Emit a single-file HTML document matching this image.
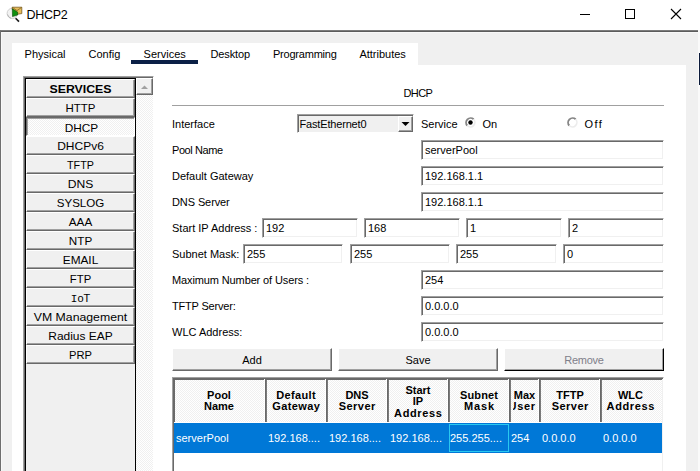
<!DOCTYPE html><html><head><meta charset="utf-8"><style>
html,body{margin:0;padding:0}
body{width:700px;height:471px;overflow:hidden;position:relative;background:#fff;font-family:"Liberation Sans", sans-serif;color:#000}
div{box-sizing:border-box}
</style></head><body>
<svg style="position:absolute;left:0;top:0" width="26" height="26" viewBox="0 0 26 26">
<circle cx="12.3" cy="13.4" r="5.2" fill="#f2f2f2" stroke="#cfcfcf" stroke-width="1"/>
<path d="M7.6 14.5 A5 5 0 0 0 11 18.2" fill="none" stroke="#a8a8a8" stroke-width="0.8"/>
<line x1="15.6" y1="18.2" x2="19" y2="21.6" stroke="#1a1a1a" stroke-width="1.6"/>
<path d="M12.2 7.2 L21.8 7.2 L21.8 13.6 L17.5 14.2 L12.2 9.2 Z" fill="#e6bd5c" stroke="#6a4c10" stroke-width="0.7"/>
<path d="M12.4 7.4 L17 10.6 L21.6 7.4" fill="none" stroke="#7a5a18" stroke-width="0.7"/>
<path d="M12.3 8.8 L17.6 12 L17.6 15 L12.5 16.6 Z" fill="#0f8f0f" stroke="#0a4a0a" stroke-width="0.6"/>
</svg>
<div style="position:absolute;left:26.5px;top:6.67px;height:16px;line-height:16px;font-size:12.5px;white-space:nowrap;text-align:left;color:#000;letter-spacing:-0.3px;">DHCP2</div>
<div style="position:absolute;left:580px;top:14px;width:10px;height:1px;background:#000;"></div>
<div style="position:absolute;left:625px;top:9px;width:10px;height:10px;border:1px solid #000;"></div>
<svg style="position:absolute;left:670px;top:8px" width="12" height="12" viewBox="0 0 12 12"><path d="M1 1 L11 11 M11 1 L1 11" stroke="#000" stroke-width="1.1"/></svg>
<div style="position:absolute;left:0px;top:30px;width:698px;height:441px;background:#f0f0f0;border-top:1px solid #7c7c7c;border-left:1px solid #6e6e6e;box-shadow:inset 0 1px #5c5c5c;"></div>
<div style="position:absolute;left:1px;top:32px;width:697px;height:1px;background:#f8f8f8;"></div>
<div style="position:absolute;left:1px;top:32px;width:1px;height:439px;background:#f8f8f8;"></div>
<div style="position:absolute;left:698px;top:30px;width:2px;height:441px;background:#fafafa;"></div>
<div style="position:absolute;left:699px;top:53px;width:1px;height:32px;background:#0b1a3a;"></div>
<div style="position:absolute;left:12px;top:43px;width:406px;height:22px;background:#fff;"></div>
<div style="position:absolute;left:24.6px;top:47.19px;height:14px;line-height:14px;font-size:11px;white-space:nowrap;text-align:left;color:#000;letter-spacing:0px;">Physical</div>
<div style="position:absolute;left:88.5px;top:47.19px;height:14px;line-height:14px;font-size:11px;white-space:nowrap;text-align:left;color:#000;letter-spacing:0px;">Config</div>
<div style="position:absolute;left:143.6px;top:47.19px;height:14px;line-height:14px;font-size:11px;white-space:nowrap;text-align:left;color:#000;letter-spacing:0px;">Services</div>
<div style="position:absolute;left:210.4px;top:47.19px;height:14px;line-height:14px;font-size:11px;white-space:nowrap;text-align:left;color:#000;letter-spacing:-0.1px;">Desktop</div>
<div style="position:absolute;left:273px;top:47.19px;height:14px;line-height:14px;font-size:11px;white-space:nowrap;text-align:left;color:#000;letter-spacing:-0.22px;">Programming</div>
<div style="position:absolute;left:359.4px;top:47.19px;height:14px;line-height:14px;font-size:11px;white-space:nowrap;text-align:left;color:#000;letter-spacing:0px;">Attributes</div>
<div style="position:absolute;left:131px;top:60px;width:67px;height:4px;background:#0b2046;"></div>
<div style="position:absolute;left:12px;top:65px;width:674px;height:406px;background:#fff;"></div>
<div style="position:absolute;left:23px;top:76px;width:131px;height:395px;border-top:1px solid #a0a0a0;border-left:1px solid #a0a0a0;border-right:1px solid #fff;box-shadow:inset 1px 1px #696969;"></div>
<div style="position:absolute;left:25px;top:78px;width:111px;height:393px;background:#f0f0f0;border:1px solid #000;border-bottom:none;"></div>
<div style="position:absolute;left:26px;top:79px;width:109px;height:19px;box-sizing:border-box;background:#f0f0f0;border:1px solid;border-color:#fff #696969 #696969 #fff;box-shadow:inset -1px -1px #a0a0a0;"></div>
<div style="position:absolute;left:26px;top:82.19px;width:109px;height:14px;line-height:14px;font-size:11px;white-space:nowrap;text-align:center;color:#000;font-weight:bold;transform:scaleX(1.120);">SERVICES</div>
<div style="position:absolute;left:26px;top:98px;width:109px;height:19px;box-sizing:border-box;background:#f0f0f0;border:1px solid;border-color:#fff #696969 #696969 #fff;box-shadow:inset -1px -1px #a0a0a0;"></div>
<div style="position:absolute;left:26px;top:101.19px;width:109px;height:14px;line-height:14px;font-size:11px;white-space:nowrap;text-align:center;color:#000;transform:scaleX(1.044);">HTTP</div>
<div style="position:absolute;left:26px;top:117px;width:109px;height:19px;background:repeating-conic-gradient(#f0f0f0 0 25%,#fff 0 50%) 0 0/2px 2px;border:1px solid;border-color:#696969 #fff #fff #696969;box-shadow:inset 1px 1px #a0a0a0;"></div>
<div style="position:absolute;left:27px;top:121.19px;width:109px;height:14px;line-height:14px;font-size:11px;white-space:nowrap;text-align:center;color:#000;transform:scaleX(1.077);">DHCP</div>
<div style="position:absolute;left:26px;top:136px;width:109px;height:19px;box-sizing:border-box;background:#f0f0f0;border:1px solid;border-color:#fff #696969 #696969 #fff;box-shadow:inset -1px -1px #a0a0a0;"></div>
<div style="position:absolute;left:26px;top:139.19px;width:109px;height:14px;line-height:14px;font-size:11px;white-space:nowrap;text-align:center;color:#000;transform:scaleX(1.090);">DHCPv6</div>
<div style="position:absolute;left:26px;top:155px;width:109px;height:19px;box-sizing:border-box;background:#f0f0f0;border:1px solid;border-color:#fff #696969 #696969 #fff;box-shadow:inset -1px -1px #a0a0a0;"></div>
<div style="position:absolute;left:26px;top:158.19px;width:109px;height:14px;line-height:14px;font-size:11px;white-space:nowrap;text-align:center;color:#000;transform:scaleX(0.978);">TFTP</div>
<div style="position:absolute;left:26px;top:174px;width:109px;height:19px;box-sizing:border-box;background:#f0f0f0;border:1px solid;border-color:#fff #696969 #696969 #fff;box-shadow:inset -1px -1px #a0a0a0;"></div>
<div style="position:absolute;left:26px;top:177.19px;width:109px;height:14px;line-height:14px;font-size:11px;white-space:nowrap;text-align:center;color:#000;transform:scaleX(1.100);">DNS</div>
<div style="position:absolute;left:26px;top:193px;width:109px;height:19px;box-sizing:border-box;background:#f0f0f0;border:1px solid;border-color:#fff #696969 #696969 #fff;box-shadow:inset -1px -1px #a0a0a0;"></div>
<div style="position:absolute;left:26px;top:196.19px;width:109px;height:14px;line-height:14px;font-size:11px;white-space:nowrap;text-align:center;color:#000;transform:scaleX(1.052);">SYSLOG</div>
<div style="position:absolute;left:26px;top:212px;width:109px;height:19px;box-sizing:border-box;background:#f0f0f0;border:1px solid;border-color:#fff #696969 #696969 #fff;box-shadow:inset -1px -1px #a0a0a0;"></div>
<div style="position:absolute;left:26px;top:215.19px;width:109px;height:14px;line-height:14px;font-size:11px;white-space:nowrap;text-align:center;color:#000;transform:scaleX(1.064);">AAA</div>
<div style="position:absolute;left:26px;top:231px;width:109px;height:19px;box-sizing:border-box;background:#f0f0f0;border:1px solid;border-color:#fff #696969 #696969 #fff;box-shadow:inset -1px -1px #a0a0a0;"></div>
<div style="position:absolute;left:26px;top:234.19px;width:109px;height:14px;line-height:14px;font-size:11px;white-space:nowrap;text-align:center;color:#000;transform:scaleX(1.062);">NTP</div>
<div style="position:absolute;left:26px;top:250px;width:109px;height:19px;box-sizing:border-box;background:#f0f0f0;border:1px solid;border-color:#fff #696969 #696969 #fff;box-shadow:inset -1px -1px #a0a0a0;"></div>
<div style="position:absolute;left:26px;top:253.19px;width:109px;height:14px;line-height:14px;font-size:11px;white-space:nowrap;text-align:center;color:#000;transform:scaleX(1.075);">EMAIL</div>
<div style="position:absolute;left:26px;top:269px;width:109px;height:19px;box-sizing:border-box;background:#f0f0f0;border:1px solid;border-color:#fff #696969 #696969 #fff;box-shadow:inset -1px -1px #a0a0a0;"></div>
<div style="position:absolute;left:26px;top:272.19px;width:109px;height:14px;line-height:14px;font-size:11px;white-space:nowrap;text-align:center;color:#000;transform:scaleX(1.026);">FTP</div>
<div style="position:absolute;left:26px;top:288px;width:109px;height:19px;box-sizing:border-box;background:#f0f0f0;border:1px solid;border-color:#fff #696969 #696969 #fff;box-shadow:inset -1px -1px #a0a0a0;"></div>
<div style="position:absolute;left:26px;top:291.19px;width:109px;height:14px;line-height:14px;font-size:11px;white-space:nowrap;text-align:center;color:#000;transform:scaleX(1.000);"><span style="font-family:'Liberation Mono'">I</span>oT</div>
<div style="position:absolute;left:26px;top:307px;width:109px;height:19px;box-sizing:border-box;background:#f0f0f0;border:1px solid;border-color:#fff #696969 #696969 #fff;box-shadow:inset -1px -1px #a0a0a0;"></div>
<div style="position:absolute;left:26px;top:310.19px;width:109px;height:14px;line-height:14px;font-size:11px;white-space:nowrap;text-align:center;color:#000;transform:scaleX(1.115);">VM Management</div>
<div style="position:absolute;left:26px;top:326px;width:109px;height:19px;box-sizing:border-box;background:#f0f0f0;border:1px solid;border-color:#fff #696969 #696969 #fff;box-shadow:inset -1px -1px #a0a0a0;"></div>
<div style="position:absolute;left:26px;top:329.19px;width:109px;height:14px;line-height:14px;font-size:11px;white-space:nowrap;text-align:center;color:#000;transform:scaleX(1.086);">Radius EAP</div>
<div style="position:absolute;left:26px;top:345px;width:109px;height:19px;box-sizing:border-box;background:#f0f0f0;border:1px solid;border-color:#fff #696969 #696969 #fff;box-shadow:inset -1px -1px #a0a0a0;"></div>
<div style="position:absolute;left:26px;top:348.19px;width:109px;height:14px;line-height:14px;font-size:11px;white-space:nowrap;text-align:center;color:#000;transform:scaleX(1.014);">PRP</div>
<div style="position:absolute;left:136px;top:95px;width:17px;height:376px;background:repeating-conic-gradient(#f0f0f0 0 25%,#fff 0 50%) 0 0/2px 2px;"></div>
<div style="position:absolute;left:136px;top:78px;width:17px;height:17px;box-sizing:border-box;background:#f0f0f0;border:1px solid;border-color:#fff #696969 #696969 #fff;box-shadow:inset -1px -1px #a0a0a0;"></div>
<svg style="position:absolute;left:136px;top:78px" width="17" height="17"><path d="M5 11 L12 11 L8.5 7.5 Z" fill="#a0a0a0"/></svg>
<div style="position:absolute;left:403.5px;top:86.19px;height:14px;line-height:14px;font-size:11px;white-space:nowrap;text-align:left;color:#000;letter-spacing:-0.6px;">DHCP</div>
<div style="position:absolute;left:172px;top:105px;width:492px;height:1px;background:#a0a0a0;"></div>
<div style="position:absolute;left:172px;top:117.19px;height:14px;line-height:14px;font-size:11px;white-space:nowrap;text-align:left;color:#000;">Interface</div>
<div style="position:absolute;left:297px;top:114px;width:117px;height:19px;box-sizing:border-box;background:#f0f0f0;border:1px solid;border-color:#a0a0a0 #fff #fff #a0a0a0;box-shadow:inset 1px 1px #696969,inset -1px -1px #f0f0f0;"></div>
<div style="position:absolute;left:299.5px;top:117.19px;height:14px;line-height:14px;font-size:11px;white-space:nowrap;text-align:left;color:#000;letter-spacing:-0.17px;">FastEthernet0</div>
<div style="position:absolute;left:398px;top:116px;width:15px;height:16px;box-sizing:border-box;background:#f0f0f0;border:1px solid;border-color:#fff #696969 #696969 #fff;box-shadow:inset -1px -1px #a0a0a0;"></div>
<svg style="position:absolute;left:398px;top:116px" width="15" height="16"><path d="M3.5 6 L11.5 6 L7.5 10 Z" fill="#000"/></svg>
<div style="position:absolute;left:421px;top:117.19px;height:14px;line-height:14px;font-size:11px;white-space:nowrap;text-align:left;color:#000;">Service</div>
<svg style="position:absolute;left:463.5px;top:116px" width="13" height="13" viewBox="0 0 13 13">
<path d="M3.32 9.68 A4.5 4.5 0 0 1 9.68 3.32" fill="none" stroke="#858585" stroke-width="1.9"/>
<path d="M9.68 3.32 A4.5 4.5 0 0 1 3.32 9.68" fill="none" stroke="#ececec" stroke-width="1.6"/>
<circle cx="6.5" cy="6.5" r="2.2" fill="#000"/>
</svg>
<div style="position:absolute;left:482.4px;top:117.19px;height:14px;line-height:14px;font-size:11px;white-space:nowrap;text-align:left;color:#000;">On</div>
<svg style="position:absolute;left:566px;top:116px" width="13" height="13" viewBox="0 0 13 13">
<path d="M3.32 9.68 A4.5 4.5 0 0 1 9.68 3.32" fill="none" stroke="#858585" stroke-width="1.9"/>
<path d="M9.68 3.32 A4.5 4.5 0 0 1 3.32 9.68" fill="none" stroke="#ececec" stroke-width="1.6"/>

</svg>
<div style="position:absolute;left:584.5px;top:117.19px;height:14px;line-height:14px;font-size:11px;white-space:nowrap;text-align:left;color:#000;letter-spacing:1.4px;">Off</div>
<div style="position:absolute;left:172px;top:143.19px;height:14px;line-height:14px;font-size:11px;white-space:nowrap;text-align:left;color:#000;letter-spacing:-0.42px;">Pool Name</div>
<div style="position:absolute;left:421px;top:140px;width:243px;height:20px;box-sizing:border-box;background:#fff;border:1px solid;border-color:#a0a0a0 #fff #fff #a0a0a0;box-shadow:inset 1px 1px #696969,inset -1px -1px #f0f0f0;"></div>
<div style="position:absolute;left:425px;top:143.19px;height:14px;line-height:14px;font-size:11px;white-space:nowrap;text-align:left;color:#000;">serverPool</div>
<div style="position:absolute;left:172px;top:169.19px;height:14px;line-height:14px;font-size:11px;white-space:nowrap;text-align:left;color:#000;letter-spacing:0px;">Default Gateway</div>
<div style="position:absolute;left:421px;top:166px;width:243px;height:20px;box-sizing:border-box;background:#fff;border:1px solid;border-color:#a0a0a0 #fff #fff #a0a0a0;box-shadow:inset 1px 1px #696969,inset -1px -1px #f0f0f0;"></div>
<div style="position:absolute;left:425px;top:169.19px;height:14px;line-height:14px;font-size:11px;white-space:nowrap;text-align:left;color:#000;">192.168.1.1</div>
<div style="position:absolute;left:172px;top:195.19px;height:14px;line-height:14px;font-size:11px;white-space:nowrap;text-align:left;color:#000;letter-spacing:-0.1px;">DNS Server</div>
<div style="position:absolute;left:421px;top:192px;width:243px;height:20px;box-sizing:border-box;background:#fff;border:1px solid;border-color:#a0a0a0 #fff #fff #a0a0a0;box-shadow:inset 1px 1px #696969,inset -1px -1px #f0f0f0;"></div>
<div style="position:absolute;left:425px;top:195.19px;height:14px;line-height:14px;font-size:11px;white-space:nowrap;text-align:left;color:#000;">192.168.1.1</div>
<div style="position:absolute;left:172px;top:221.19px;height:14px;line-height:14px;font-size:11px;white-space:nowrap;text-align:left;color:#000;">Start IP Address :</div>
<div style="position:absolute;left:262px;top:218px;width:96px;height:20px;box-sizing:border-box;background:#fff;border:1px solid;border-color:#a0a0a0 #fff #fff #a0a0a0;box-shadow:inset 1px 1px #696969,inset -1px -1px #f0f0f0;"></div>
<div style="position:absolute;left:266px;top:221.19px;height:14px;line-height:14px;font-size:11px;white-space:nowrap;text-align:left;color:#000;">192</div>
<div style="position:absolute;left:364px;top:218px;width:96px;height:20px;box-sizing:border-box;background:#fff;border:1px solid;border-color:#a0a0a0 #fff #fff #a0a0a0;box-shadow:inset 1px 1px #696969,inset -1px -1px #f0f0f0;"></div>
<div style="position:absolute;left:368px;top:221.19px;height:14px;line-height:14px;font-size:11px;white-space:nowrap;text-align:left;color:#000;">168</div>
<div style="position:absolute;left:466px;top:218px;width:96px;height:20px;box-sizing:border-box;background:#fff;border:1px solid;border-color:#a0a0a0 #fff #fff #a0a0a0;box-shadow:inset 1px 1px #696969,inset -1px -1px #f0f0f0;"></div>
<div style="position:absolute;left:470px;top:221.19px;height:14px;line-height:14px;font-size:11px;white-space:nowrap;text-align:left;color:#000;">1</div>
<div style="position:absolute;left:568px;top:218px;width:96px;height:20px;box-sizing:border-box;background:#fff;border:1px solid;border-color:#a0a0a0 #fff #fff #a0a0a0;box-shadow:inset 1px 1px #696969,inset -1px -1px #f0f0f0;"></div>
<div style="position:absolute;left:572px;top:221.19px;height:14px;line-height:14px;font-size:11px;white-space:nowrap;text-align:left;color:#000;">2</div>
<div style="position:absolute;left:172px;top:247.19px;height:14px;line-height:14px;font-size:11px;white-space:nowrap;text-align:left;color:#000;">Subnet Mask:</div>
<div style="position:absolute;left:243px;top:244px;width:100px;height:20px;box-sizing:border-box;background:#fff;border:1px solid;border-color:#a0a0a0 #fff #fff #a0a0a0;box-shadow:inset 1px 1px #696969,inset -1px -1px #f0f0f0;"></div>
<div style="position:absolute;left:247px;top:247.19px;height:14px;line-height:14px;font-size:11px;white-space:nowrap;text-align:left;color:#000;">255</div>
<div style="position:absolute;left:350px;top:244px;width:100px;height:20px;box-sizing:border-box;background:#fff;border:1px solid;border-color:#a0a0a0 #fff #fff #a0a0a0;box-shadow:inset 1px 1px #696969,inset -1px -1px #f0f0f0;"></div>
<div style="position:absolute;left:354px;top:247.19px;height:14px;line-height:14px;font-size:11px;white-space:nowrap;text-align:left;color:#000;">255</div>
<div style="position:absolute;left:456px;top:244px;width:101px;height:20px;box-sizing:border-box;background:#fff;border:1px solid;border-color:#a0a0a0 #fff #fff #a0a0a0;box-shadow:inset 1px 1px #696969,inset -1px -1px #f0f0f0;"></div>
<div style="position:absolute;left:460px;top:247.19px;height:14px;line-height:14px;font-size:11px;white-space:nowrap;text-align:left;color:#000;">255</div>
<div style="position:absolute;left:563px;top:244px;width:101px;height:20px;box-sizing:border-box;background:#fff;border:1px solid;border-color:#a0a0a0 #fff #fff #a0a0a0;box-shadow:inset 1px 1px #696969,inset -1px -1px #f0f0f0;"></div>
<div style="position:absolute;left:567px;top:247.19px;height:14px;line-height:14px;font-size:11px;white-space:nowrap;text-align:left;color:#000;">0</div>
<div style="position:absolute;left:172px;top:273.19px;height:14px;line-height:14px;font-size:11px;white-space:nowrap;text-align:left;color:#000;letter-spacing:-0.12px;">Maximum Number of Users :</div>
<div style="position:absolute;left:421px;top:270px;width:243px;height:20px;box-sizing:border-box;background:#fff;border:1px solid;border-color:#a0a0a0 #fff #fff #a0a0a0;box-shadow:inset 1px 1px #696969,inset -1px -1px #f0f0f0;"></div>
<div style="position:absolute;left:425px;top:273.19px;height:14px;line-height:14px;font-size:11px;white-space:nowrap;text-align:left;color:#000;">254</div>
<div style="position:absolute;left:172px;top:299.19px;height:14px;line-height:14px;font-size:11px;white-space:nowrap;text-align:left;color:#000;letter-spacing:-0.18px;">TFTP Server:</div>
<div style="position:absolute;left:421px;top:296px;width:243px;height:20px;box-sizing:border-box;background:#fff;border:1px solid;border-color:#a0a0a0 #fff #fff #a0a0a0;box-shadow:inset 1px 1px #696969,inset -1px -1px #f0f0f0;"></div>
<div style="position:absolute;left:425px;top:299.19px;height:14px;line-height:14px;font-size:11px;white-space:nowrap;text-align:left;color:#000;">0.0.0.0</div>
<div style="position:absolute;left:172px;top:325.19px;height:14px;line-height:14px;font-size:11px;white-space:nowrap;text-align:left;color:#000;letter-spacing:0px;">WLC Address:</div>
<div style="position:absolute;left:421px;top:322px;width:243px;height:20px;box-sizing:border-box;background:#fff;border:1px solid;border-color:#a0a0a0 #fff #fff #a0a0a0;box-shadow:inset 1px 1px #696969,inset -1px -1px #f0f0f0;"></div>
<div style="position:absolute;left:425px;top:325.19px;height:14px;line-height:14px;font-size:11px;white-space:nowrap;text-align:left;color:#000;">0.0.0.0</div>
<div style="position:absolute;left:172px;top:348px;width:160px;height:23px;box-sizing:border-box;background:#f0f0f0;border:1px solid;border-color:#fff #696969 #696969 #fff;box-shadow:inset -1px -1px #a0a0a0;"></div>
<div style="position:absolute;left:172px;top:353.19px;width:160px;height:14px;line-height:14px;font-size:11px;white-space:nowrap;text-align:center;color:#000;">Add</div>
<div style="position:absolute;left:338px;top:348px;width:160px;height:23px;box-sizing:border-box;background:#f0f0f0;border:1px solid;border-color:#fff #696969 #696969 #fff;box-shadow:inset -1px -1px #a0a0a0;"></div>
<div style="position:absolute;left:338px;top:353.19px;width:160px;height:14px;line-height:14px;font-size:11px;white-space:nowrap;text-align:center;color:#000;">Save</div>
<div style="position:absolute;left:504px;top:348px;width:160px;height:23px;background:#f0f0f0;border:1px solid;border-color:#fff #000 #000 #fff;box-shadow:inset -1px -1px #a0a0a0;"></div>
<div style="position:absolute;left:504px;top:353.19px;width:160px;height:14px;line-height:14px;font-size:11px;white-space:nowrap;text-align:center;color:#7f7f8a;letter-spacing:-0.25px;">Remove</div>
<div style="position:absolute;left:172px;top:377px;width:492px;height:94px;background:#fff;border-top:1px solid #a0a0a0;border-left:1px solid #a0a0a0;border-right:1px solid #fff;box-shadow:inset 1px 1px #696969;"></div>
<div style="position:absolute;left:662px;top:379px;width:1px;height:92px;background:#f0f0f0;"></div>
<div style="position:absolute;left:175px;top:380px;width:487px;height:42px;background:repeating-conic-gradient(#f0f0f0 0 25%,#fff 0 50%) 0 0/2px 2px;"></div>
<div style="position:absolute;left:174px;top:379px;width:488px;height:1px;background:#696969;"></div>
<div style="position:absolute;left:174px;top:379px;width:1px;height:44px;background:#696969;"></div>
<div style="position:absolute;left:174px;top:422px;width:488px;height:1px;background:#fff;"></div>
<div style="position:absolute;left:264px;top:379px;width:1px;height:43px;background:#fff;"></div>
<div style="position:absolute;left:265px;top:380px;width:2px;height:42px;background:#696969;box-shadow:inset -1px 0 #7a7a7a;"></div>
<div style="position:absolute;left:176px;top:388.19px;width:86px;height:14px;overflow:hidden;"><div style="position:absolute;left:-2px;top:0;width:90px;line-height:14px;font-size:11px;font-weight:bold;text-align:center;white-space:nowrap;letter-spacing:0px;text-indent:0px;">Pool</div></div>
<div style="position:absolute;left:176px;top:399.19px;width:86px;height:14px;overflow:hidden;"><div style="position:absolute;left:-2px;top:0;width:90px;line-height:14px;font-size:11px;font-weight:bold;text-align:center;white-space:nowrap;letter-spacing:0px;text-indent:0px;">Name</div></div>
<div style="position:absolute;left:325px;top:379px;width:1px;height:43px;background:#fff;"></div>
<div style="position:absolute;left:326px;top:380px;width:2px;height:42px;background:#696969;box-shadow:inset -1px 0 #7a7a7a;"></div>
<div style="position:absolute;left:269px;top:388.19px;width:54px;height:14px;overflow:hidden;"><div style="position:absolute;left:-2px;top:0;width:58px;line-height:14px;font-size:11px;font-weight:bold;text-align:center;white-space:nowrap;letter-spacing:0.35px;text-indent:0.35px;">Default</div></div>
<div style="position:absolute;left:269px;top:399.19px;width:54px;height:14px;overflow:hidden;"><div style="position:absolute;left:-2px;top:0;width:58px;line-height:14px;font-size:11px;font-weight:bold;text-align:center;white-space:nowrap;letter-spacing:0.4px;text-indent:0.4px;">Gateway</div></div>
<div style="position:absolute;left:386px;top:379px;width:1px;height:43px;background:#fff;"></div>
<div style="position:absolute;left:387px;top:380px;width:2px;height:42px;background:#696969;box-shadow:inset -1px 0 #7a7a7a;"></div>
<div style="position:absolute;left:330px;top:388.19px;width:54px;height:14px;overflow:hidden;"><div style="position:absolute;left:-2px;top:0;width:58px;line-height:14px;font-size:11px;font-weight:bold;text-align:center;white-space:nowrap;letter-spacing:0px;text-indent:0px;">DNS</div></div>
<div style="position:absolute;left:330px;top:399.19px;width:54px;height:14px;overflow:hidden;"><div style="position:absolute;left:-2px;top:0;width:58px;line-height:14px;font-size:11px;font-weight:bold;text-align:center;white-space:nowrap;letter-spacing:0.45px;text-indent:0.45px;">Server</div></div>
<div style="position:absolute;left:447px;top:379px;width:1px;height:43px;background:#fff;"></div>
<div style="position:absolute;left:448px;top:380px;width:2px;height:42px;background:#696969;box-shadow:inset -1px 0 #7a7a7a;"></div>
<div style="position:absolute;left:391px;top:383.19px;width:54px;height:14px;overflow:hidden;"><div style="position:absolute;left:-2px;top:0;width:58px;line-height:14px;font-size:11px;font-weight:bold;text-align:center;white-space:nowrap;letter-spacing:0px;text-indent:0px;">Start</div></div>
<div style="position:absolute;left:391px;top:394.19px;width:54px;height:14px;overflow:hidden;"><div style="position:absolute;left:-2px;top:0;width:58px;line-height:14px;font-size:11px;font-weight:bold;text-align:center;white-space:nowrap;letter-spacing:0px;text-indent:0px;">IP</div></div>
<div style="position:absolute;left:391px;top:406.19px;width:54px;height:14px;overflow:hidden;"><div style="position:absolute;left:-2px;top:0;width:58px;line-height:14px;font-size:11px;font-weight:bold;text-align:center;white-space:nowrap;letter-spacing:0.65px;text-indent:0.65px;">Address</div></div>
<div style="position:absolute;left:508px;top:379px;width:1px;height:43px;background:#fff;"></div>
<div style="position:absolute;left:509px;top:380px;width:2px;height:42px;background:#696969;box-shadow:inset -1px 0 #7a7a7a;"></div>
<div style="position:absolute;left:452px;top:388.19px;width:54px;height:14px;overflow:hidden;"><div style="position:absolute;left:-2px;top:0;width:58px;line-height:14px;font-size:11px;font-weight:bold;text-align:center;white-space:nowrap;letter-spacing:0.15px;text-indent:0.15px;">Subnet</div></div>
<div style="position:absolute;left:452px;top:399.19px;width:54px;height:14px;overflow:hidden;"><div style="position:absolute;left:-2px;top:0;width:58px;line-height:14px;font-size:11px;font-weight:bold;text-align:center;white-space:nowrap;letter-spacing:0.9px;text-indent:0.9px;">Mask</div></div>
<div style="position:absolute;left:538px;top:379px;width:1px;height:43px;background:#fff;"></div>
<div style="position:absolute;left:539px;top:380px;width:2px;height:42px;background:#696969;box-shadow:inset -1px 0 #7a7a7a;"></div>
<div style="position:absolute;left:513px;top:388.19px;width:23px;height:14px;overflow:hidden;"><div style="position:absolute;left:-2px;top:0;width:27px;line-height:14px;font-size:11px;font-weight:bold;text-align:center;white-space:nowrap;letter-spacing:0px;text-indent:0px;">Max</div></div>
<div style="position:absolute;left:513px;top:399.19px;width:23px;height:14px;overflow:hidden;"><div style="position:absolute;left:-2px;top:0;width:27px;line-height:14px;font-size:11px;font-weight:bold;text-align:center;white-space:nowrap;letter-spacing:0.7px;text-indent:-2.5px;">Users</div></div>
<div style="position:absolute;left:599px;top:379px;width:1px;height:43px;background:#fff;"></div>
<div style="position:absolute;left:600px;top:380px;width:2px;height:42px;background:#696969;box-shadow:inset -1px 0 #7a7a7a;"></div>
<div style="position:absolute;left:543px;top:388.19px;width:54px;height:14px;overflow:hidden;"><div style="position:absolute;left:-2px;top:0;width:58px;line-height:14px;font-size:11px;font-weight:bold;text-align:center;white-space:nowrap;letter-spacing:0px;text-indent:0px;">TFTP</div></div>
<div style="position:absolute;left:543px;top:399.19px;width:54px;height:14px;overflow:hidden;"><div style="position:absolute;left:-2px;top:0;width:58px;line-height:14px;font-size:11px;font-weight:bold;text-align:center;white-space:nowrap;letter-spacing:0.45px;text-indent:0.45px;">Server</div></div>
<div style="position:absolute;left:604px;top:388.19px;width:53px;height:14px;overflow:hidden;"><div style="position:absolute;left:-2px;top:0;width:57px;line-height:14px;font-size:11px;font-weight:bold;text-align:center;white-space:nowrap;letter-spacing:0px;text-indent:0px;">WLC</div></div>
<div style="position:absolute;left:604px;top:399.19px;width:53px;height:14px;overflow:hidden;"><div style="position:absolute;left:-2px;top:0;width:57px;line-height:14px;font-size:11px;font-weight:bold;text-align:center;white-space:nowrap;letter-spacing:0.65px;text-indent:0.65px;">Address</div></div>
<div style="position:absolute;left:174px;top:423px;width:488px;height:30px;background:#0078d7;"></div>
<div style="position:absolute;left:176px;top:431.19px;height:14px;line-height:14px;font-size:11px;white-space:nowrap;text-align:left;color:#fff;">serverPool</div>
<div style="position:absolute;left:268px;top:431.19px;height:14px;line-height:14px;font-size:11px;white-space:nowrap;text-align:left;color:#fff;">192.168....</div>
<div style="position:absolute;left:329px;top:431.19px;height:14px;line-height:14px;font-size:11px;white-space:nowrap;text-align:left;color:#fff;">192.168....</div>
<div style="position:absolute;left:390px;top:431.19px;height:14px;line-height:14px;font-size:11px;white-space:nowrap;text-align:left;color:#fff;">192.168....</div>
<div style="position:absolute;left:450px;top:431.19px;height:14px;line-height:14px;font-size:11px;white-space:nowrap;text-align:left;color:#fff;">255.255....</div>
<div style="position:absolute;left:511px;top:431.19px;height:14px;line-height:14px;font-size:11px;white-space:nowrap;text-align:left;color:#fff;">254</div>
<div style="position:absolute;left:542px;top:431.19px;height:14px;line-height:14px;font-size:11px;white-space:nowrap;text-align:left;color:#fff;">0.0.0.0</div>
<div style="position:absolute;left:603px;top:431.19px;height:14px;line-height:14px;font-size:11px;white-space:nowrap;text-align:left;color:#fff;">0.0.0.0</div>
<div style="position:absolute;left:449px;top:424px;width:60px;height:28px;border:1px solid #29c8f0;"></div>
</body></html>
